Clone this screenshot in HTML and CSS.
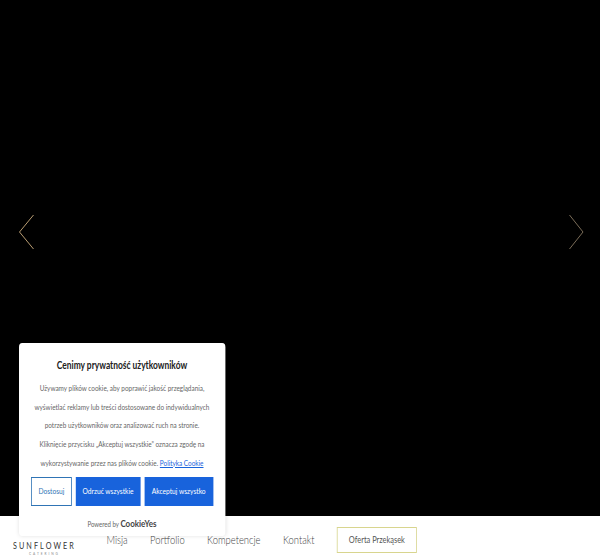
FILE: index.html
```html
<!DOCTYPE html>
<html lang="pl">
<head>
  <meta charset="UTF-8">
  <meta name="viewport" content="width=device-width, initial-scale=1.0">
  <title>Sunflower Catering</title>
  <link rel="stylesheet" href="styles.css">
</head>
<body>
  <div class="hero">
    <svg class="arrow arrow-left" width="16" height="36" viewBox="0 0 16 36">
      <path d="M14.5 1 L0.5 18 L14.5 35" fill="none" stroke="#b89c72" stroke-width="1"/>
    </svg>
    <svg class="arrow arrow-right" width="16" height="36" viewBox="0 0 16 36">
      <path d="M1.5 1 L15 18 L1.5 35" fill="none" stroke="#7a6c58" stroke-width="1"/>
    </svg>
  </div>

  <nav class="nav">
    <a class="logo" href="#">
      <span class="logo-name">SUNFLOWER</span>
      <span class="logo-sub">CATERING</span>
    </a>
    <a class="nav-link" href="#">Misja</a>
    <a class="nav-link" href="#">Portfolio</a>
    <a class="nav-link" href="#">Kompetencje</a>
    <a class="nav-link" href="#">Kontakt</a>
    <a class="nav-cta" href="#">Oferta Przekąsek</a>
  </nav>

  <!-- Cookie banner -->
  <div class="cookie">
    <h2 class="cookie-title">Cenimy prywatność użytkowników</h2>
    <p class="cookie-text">Używamy plików cookie, aby poprawić jakość przeglądania,<br>
      wyświetlać reklamy lub treści dostosowane do indywidualnych<br>
      potrzeb użytkowników oraz analizować ruch na stronie.<br>
      Kliknięcie przycisku „Akceptuj wszystkie” oznacza zgodę na<br>
      wykorzystywanie przez nas plików cookie. <a href="#">Polityka Cookie</a></p>
    <div class="cookie-buttons">
      <button class="btn btn-outline">Dostosuj</button>
      <button class="btn btn-reject">Odrzuć wszystkie</button>
      <button class="btn btn-accept">Akceptuj wszystko</button>
    </div>
    <div class="cookie-powered">Powered by <strong>CookieYes</strong></div>
  </div>
</body>
</html>
```

FILE: styles.css
```css
html, body {
  height: 560px;
  overflow: hidden;
}

body {
  margin: 0;
  background-color: #fff;
  font-family: Lato, "Liberation Sans", sans-serif;
}

a {
  text-decoration: none;
}

.hero {
  position: relative;
  height: 516px;
  background-color: #000;
}

.arrow {
  position: absolute;
  top: 214px;
}

.arrow-left {
  left: 19px;
}

.arrow-right {
  right: 16px;
}

/* nav and banner are laid out wide, then squeezed like the original */
.nav {
  display: flex;
  align-items: flex-start;
  width: 560px;
  height: 44px;
  padding-left: 16px;
  box-sizing: border-box;
  transform: scaleX(0.8);
  transform-origin: left top;
}

.logo {
  display: flex;
  flex-direction: column;
  align-items: center;
  width: 79px;
  margin-top: 25px;
  margin-right: 38px;
  color: #333;
}

.logo-name {
  font-size: 9px;
  letter-spacing: 2.6px;
  white-space: nowrap;
  line-height: 10px;
}

.logo-sub {
  font-size: 4px;
  letter-spacing: 2.4px;
  line-height: 6px;
  color: #888;
}

.nav-link {
  margin-top: 16px;
  margin-right: 28px;
  font-size: 11.8px;
  font-weight: 300;
  line-height: 15px;
  color: #444;
}

.nav-cta {
  margin-top: 11px;
  height: 24px;
  padding: 0 14px;
  border: 1px solid #d8d58e;
  font-size: 9.3px;
  line-height: 24px;
  color: #555;
}

/* Cookie banner */
.cookie {
  position: absolute;
  left: 19px;
  top: 343px;
  box-sizing: border-box;
  width: 257.5px;
  height: 193px;
  padding: 15px 15px 0;
  background-color: #fff;
  border-radius: 4px;
  box-shadow: 0 0 5px rgba(0, 0, 0, 0.12);
  text-align: center;
  transform: scaleX(0.8);
  transform-origin: left top;
}

.cookie-title {
  margin: 0 0 7px;
  font-size: 10.5px;
  font-weight: 700;
  line-height: 14px;
  color: #212121;
}

.cookie-text {
  margin: 0 0 4px;
  font-size: 8px;
  line-height: 18.7px;
  color: #666;
}

.cookie-text a {
  color: #1863dc;
  text-decoration: underline;
}

.cookie-buttons {
  display: flex;
  gap: 5px;
}

.btn {
  height: 29px;
  padding: 0;
  border: none;
  background-color: #1863dc;
  color: #fff;
  font-family: inherit;
  font-size: 8.3px;
  font-weight: 400;
}

.btn-outline {
  width: 51px;
  border: 1.5px solid #2f74b5;
  background-color: #fff;
  color: #2f74b5;
}

.btn-reject {
  width: 81px;
}

.btn-accept {
  width: 86px;
}

.cookie-powered {
  margin-top: 11px;
  font-size: 7.6px;
  color: #666;
}

.cookie-powered strong {
  font-size: 10px;
  color: #444;
}
```
